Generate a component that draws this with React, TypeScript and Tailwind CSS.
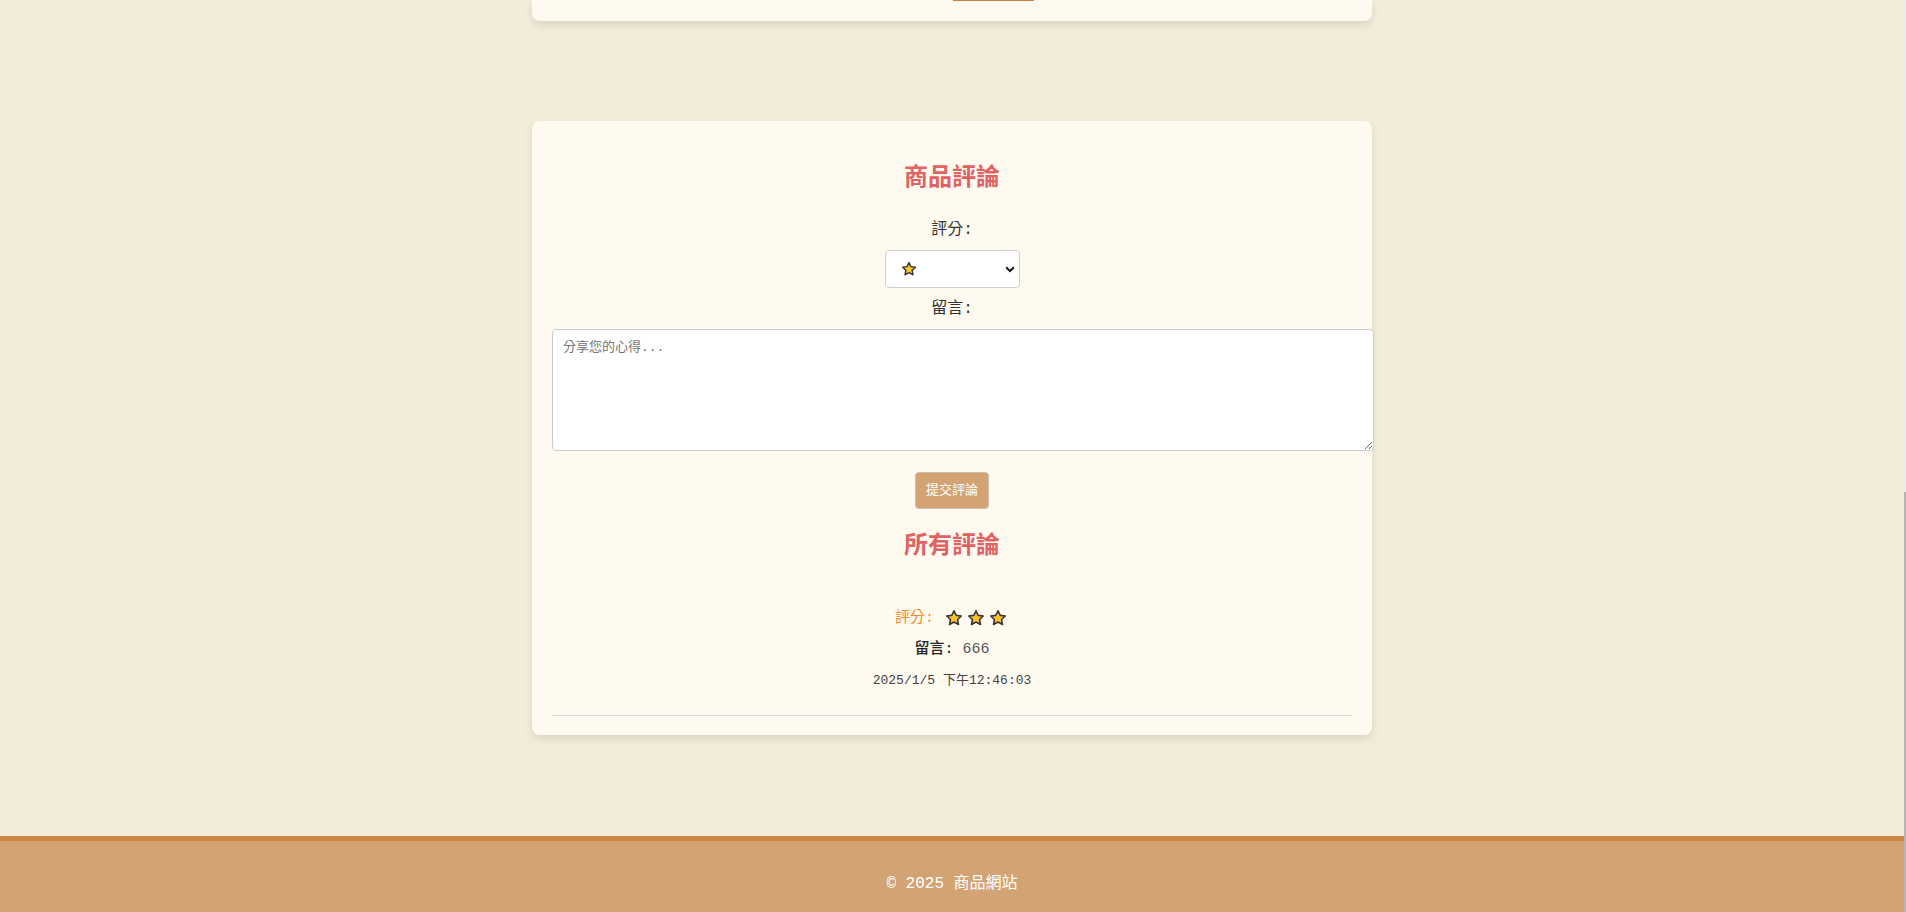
import React from 'react';

// emoji-style star (yellow fill, dark outline)
const Star = ({ size = 18 }: { size?: number }) => (
  <svg width={size} height={size} viewBox="0 0 24 24">
    <path
      d="M12 2.4l2.95 6.1 6.7.85-4.9 4.65 1.25 6.7L12 17.4l-6 3.3 1.25-6.7-4.9-4.65 6.7-.85z"
      fill="#fdc52c"
      stroke="#363636"
      strokeWidth="2.1"
      strokeLinejoin="round"
    />
  </svg>
);

const Chevron = () => (
  <svg width="10" height="7" viewBox="0 0 10 7">
    <path d="M1.2 1.3L5 5.1l3.8-3.8" fill="none" stroke="#111" strokeWidth="2" />
  </svg>
);

const reviews = [{ rating: 3, comment: '666', time: '2025/1/5 下午12:46:03' }];

export default function App() {
  return (
    <div className="h-[912px] overflow-hidden flex bg-[#f4ecda] text-[#333] font-['Liberation_Mono','Noto_Sans_CJK_TC',monospace]">
      <div className="flex-1 flex flex-col">
        <main className="flex-1 flex flex-col items-center">
          {/* bottom edge of the product card, scrolled past */}
          <div className="w-[840px] h-[21px] shrink-0 bg-[#fefaf0] rounded-b-lg shadow-[0_4px_8px_rgba(0,0,0,0.1)] flex pl-[421px]">
            <div className="w-[81px] h-px bg-[#cd7f3a]" />
          </div>

          {/* Reviews */}
          <section className="mt-[100px] w-[840px] bg-[#fefaf0] rounded-lg shadow-[0_4px_8px_rgba(0,0,0,0.1)] px-5 pt-5 pb-[19px] text-center">
            <h2 className="mt-5 text-2xl leading-[36px] font-bold text-[#e06262]">商品評論</h2>

            <div className="mt-[21px] text-base leading-6">評分:</div>
            <div className="mt-2 flex justify-center">
              <div className="w-[135px] h-[38px] bg-white border border-[#cfcfcf] rounded flex items-center justify-between pl-[15px] pr-[4px]">
                <Star size={16} />
                <Chevron />
              </div>
            </div>

            <div className="mt-[9px] text-base leading-6">留言:</div>
            <textarea
              className="mt-2 block w-[822px] h-[122px] p-[10px] bg-white border border-[#ccc] rounded text-[13px] leading-[15px] placeholder:text-[#767676]"
              placeholder="分享您的心得..."
            />

            <button className="mt-[21px] w-[74px] h-[37px] bg-[#d4a373] border border-[#cbbfb2] rounded text-white text-[13px]">
              提交評論
            </button>

            <h2 className="mt-5 text-2xl leading-[36px] font-bold text-[#e06262]">所有評論</h2>

            {reviews.map((r, i) => (
              <div key={i} className="mt-[41px] pb-6 border-b border-[#ddd]">
                <div className="text-[15px] leading-6 flex justify-center items-center">
                  <span className="translate-y-px text-[#f28b25]">評分:</span>
                  <span className="ml-[9px] flex">
                    {Array.from({ length: r.rating }).map((_, j) => (
                      <span key={j} className="w-[22px] flex justify-center">
                        <Star />
                      </span>
                    ))}
                  </span>
                </div>
                <div className="mt-2 text-[15px] leading-6">
                  <span className="font-medium text-[#222]">留言:</span>{' '}
                  <span className="text-[#555]">{r.comment}</span>
                </div>
                <div className="mt-[9px] text-[13px] leading-5 text-[#444]">{r.time}</div>
              </div>
            ))}
          </section>
        </main>

        <footer className="shrink-0 border-t-[5px] border-[#cd853f] bg-[#d4a373] pt-[31px] pb-4 text-center text-white text-base leading-6">
          © 2025 商品網站
        </footer>
      </div>

      {/* thin page scrollbar, scrolled to the bottom */}
      <div className="w-[2px] shrink-0 flex flex-col bg-[#ececec]">
        <div className="h-[492px]" />
        <div className="flex-1 bg-[#b5b5b5]" />
      </div>
    </div>
  );
}
